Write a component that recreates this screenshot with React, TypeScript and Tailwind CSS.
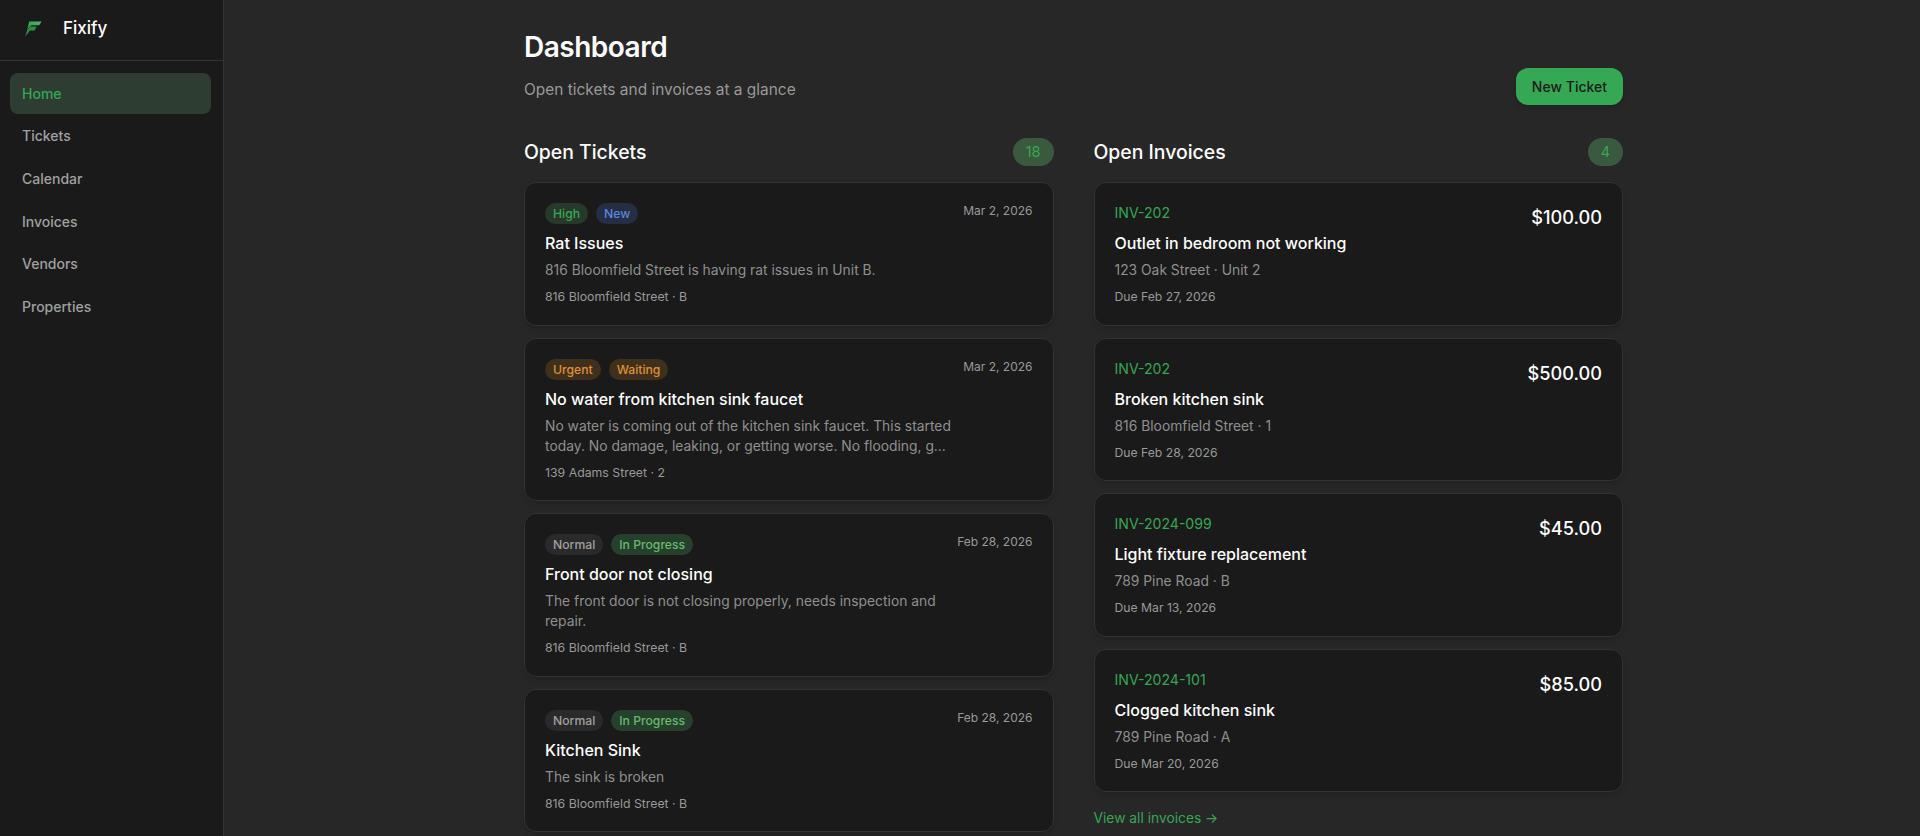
const navItems = ["Home", "Tickets", "Calendar", "Invoices", "Vendors", "Properties"];

const badgeStyles: Record<string, string> = {
  High: "bg-[#27392b] text-[#34a853]",
  New: "bg-[#262e45] text-[#5a86dc]",
  Urgent: "bg-[#3f301c] text-[#e0912f]",
  Waiting: "bg-[#3f301c] text-[#e0912f]",
  Normal: "bg-[#2a2a2a] text-[#a0a0a0]",
  "In Progress": "bg-[#27402d] text-[#66bb6a]",
};

const tickets = [
  {
    badges: ["High", "New"],
    date: "Mar 2, 2026",
    title: "Rat Issues",
    body: "816 Bloomfield Street is having rat issues in Unit B.",
    place: "816 Bloomfield Street · B",
  },
  {
    badges: ["Urgent", "Waiting"],
    date: "Mar 2, 2026",
    title: "No water from kitchen sink faucet",
    body: "No water is coming out of the kitchen sink faucet. This started today. No damage, leaking, or getting worse. No flooding, g...",
    place: "139 Adams Street · 2",
  },
  {
    badges: ["Normal", "In Progress"],
    date: "Feb 28, 2026",
    title: "Front door not closing",
    body: "The front door is not closing properly, needs inspection and repair.",
    place: "816 Bloomfield Street · B",
  },
  {
    badges: ["Normal", "In Progress"],
    date: "Feb 28, 2026",
    title: "Kitchen Sink",
    body: "The sink is broken",
    place: "816 Bloomfield Street · B",
  },
];

const invoices = [
  { id: "INV-202", amount: "$100.00", title: "Outlet in bedroom not working", place: "123 Oak Street · Unit 2", due: "Due Feb 27, 2026" },
  { id: "INV-202", amount: "$500.00", title: "Broken kitchen sink", place: "816 Bloomfield Street · 1", due: "Due Feb 28, 2026" },
  { id: "INV-2024-099", amount: "$45.00", title: "Light fixture replacement", place: "789 Pine Road · B", due: "Due Mar 13, 2026" },
  { id: "INV-2024-101", amount: "$85.00", title: "Clogged kitchen sink", place: "789 Pine Road · A", due: "Due Mar 20, 2026" },
];

function Logo() {
  return (
    <svg width="18" height="16" viewBox="0 0 18 16" className="shrink-0">
      <defs>
        <linearGradient id="logoTop" x1="0" y1="1" x2="1" y2="0">
          <stop offset="0" stopColor="#2f8f45" />
          <stop offset="1" stopColor="#4cc069" />
        </linearGradient>
      </defs>
      <path d="M5.2 0.4H17.6L15.2 4.2H7.6L3.2 8.6Z" fill="url(#logoTop)" />
      <path d="M3.6 8.2L7 5.6H12.6L10.6 9.4H6L1 15.8Z" fill="#2f8f45" />
    </svg>
  );
}

function SectionHeader({ title, count }: { title: string; count: number }) {
  return (
    <div className="flex items-center justify-between mb-[16px]">
      <h2 className="text-[19.4px] leading-[28px] font-medium text-white">{title}</h2>
      <span className="h-[28px] min-w-[34px] px-[13px] rounded-full bg-[#3a5a40] text-[#34a853] text-[14.5px] leading-[28px] text-center">
        {count}
      </span>
    </div>
  );
}

function TicketCard({ ticket }: { ticket: (typeof tickets)[number] }) {
  return (
    <div className="rounded-[12px] border border-[#333333] bg-[#1a1a1a] px-[20px] pt-[19px] pb-[18.5px] shadow-md">
      <div className="flex items-start justify-between">
        <div className="flex gap-[8px] pt-[1px]">
          {ticket.badges.map((b) => (
            <span key={b} className={`h-[21px] px-[8px] rounded-full text-[12.2px] leading-[21px] font-medium ${badgeStyles[b]}`}>
              {b}
            </span>
          ))}
        </div>
        <span className="text-[12px] leading-[18px] text-[#999999]">{ticket.date}</span>
      </div>
      <div className="mt-[7px] text-[16px] leading-[24px] font-medium text-white">{ticket.title}</div>
      <p className="mt-[5px] max-w-[420px] text-[13.85px] leading-[20px] text-[#8f8f8f]">{ticket.body}</p>
      <div className="mt-[8px] text-[12.3px] leading-[18px] text-[#999999]">{ticket.place}</div>
    </div>
  );
}

function InvoiceCard({ invoice }: { invoice: (typeof invoices)[number] }) {
  return (
    <div className="rounded-[12px] border border-[#333333] bg-[#1a1a1a] px-[20px] pt-[20px] pb-[18.5px] shadow-md">
      <div className="flex items-start justify-between">
        <div>
          <div className="text-[14.1px] leading-[20px] text-[#34a853]">{invoice.id}</div>
          <div className="mt-[8px] text-[16px] leading-[24px] font-medium text-white">{invoice.title}</div>
          <div className="mt-[5px] text-[13.85px] leading-[20px] text-[#8f8f8f]">{invoice.place}</div>
          <div className="mt-[8px] text-[12.2px] leading-[18px] text-[#999999]">{invoice.due}</div>
        </div>
        <div className="text-[18.2px] leading-[28px] font-medium text-white">{invoice.amount}</div>
      </div>
    </div>
  );
}

export default function App() {
  return (
    <div className="flex h-screen overflow-hidden bg-[#272727] font-['Inter',sans-serif]">
      {/* Sidebar */}
      <aside className="w-[224px] shrink-0 bg-[#1a1a1a] border-r border-[#333333]">
        <div className="flex items-center gap-[21px] h-[61px] pl-[24px] pb-[2px] border-b border-[#333333]">
          <Logo />
          <span className="text-[17px] font-medium text-white">Fixify</span>
        </div>
        <nav className="flex flex-col gap-[1.6px] pl-[10px] pr-[12px] pt-[11.75px]">
          {navItems.map((item) => (
            <a
              key={item}
              className={
                item === "Home"
                  ? "h-[41px] px-[12px] flex items-center rounded-[8px] bg-[#2d3d31] text-[#34a853] text-[14px] font-medium"
                  : "h-[41px] px-[12px] flex items-center rounded-[8px] text-[#a0a0a0] text-[14px] font-medium"
              }
            >
              {item}
            </a>
          ))}
        </nav>
      </aside>

      {/* Main */}
      <main className="flex-1 flex justify-center pl-[3px] pt-[25px]">
        <div className="w-[1099px]">
          <div className="flex items-end justify-between mb-[33px]">
            <div className="pb-[3px]">
              <h1 className="text-[28px] leading-[44px] tracking-[-0.5px] font-semibold text-white">Dashboard</h1>
              <p className="mt-[9px] text-[15.45px] leading-[24px] text-[#999999]">Open tickets and invoices at a glance</p>
            </div>
            <button className="h-[37px] px-[16px] rounded-[12px] bg-[#34a853] text-[#1a1a1a] text-[14px] font-medium shadow-md">
              New Ticket
            </button>
          </div>
          <div className="grid grid-cols-2 gap-[40px]">
            <section>
              <SectionHeader title="Open Tickets" count={18} />
              <div className="flex flex-col gap-[12px]">
                {tickets.map((t) => (
                  <TicketCard key={t.title} ticket={t} />
                ))}
              </div>
            </section>
            <section>
              <SectionHeader title="Open Invoices" count={4} />
              <div className="flex flex-col gap-[12px]">
                {invoices.map((i) => (
                  <InvoiceCard key={i.id + i.amount} invoice={i} />
                ))}
              </div>
              <a className="block mt-[16px] text-[13.8px] leading-[20px] text-[#34a853]">View all invoices →</a>
            </section>
          </div>
        </div>
      </main>
    </div>
  );
}
